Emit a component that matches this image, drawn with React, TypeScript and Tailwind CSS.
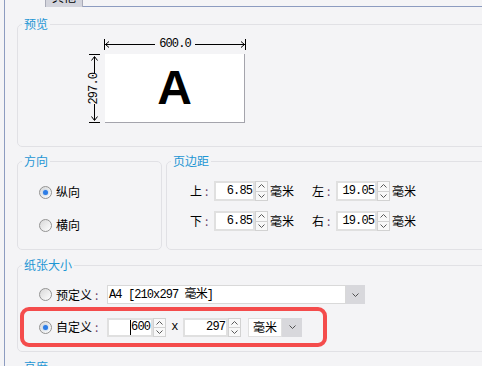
import type { ReactNode } from "react";

const mono = "font-['Liberation_Mono','Noto_Sans_CJK_SC',monospace] text-[12px] tracking-[-0.9px]";

const Chevron = ({ up }: { up?: boolean }) => (
    <svg width="7" height="4" viewBox="0 0 7 4">
        <polyline
            points={up ? "0.5,3.5 3.5,0.5 6.5,3.5" : "0.5,0.5 3.5,3.5 6.5,0.5"}
            fill="none"
            stroke="currentColor"
            strokeWidth="1"
        />
    </svg>
);

const Spin = () => (
    <div className="flex flex-col w-[13px] h-full border border-[#d2d2d2] bg-[#f8f8f8] text-[#5a5a5a]">
        <div className="flex-1 flex items-center justify-center border-b border-[#d2d2d2]">
            <Chevron up />
        </div>
        <div className="flex-1 flex items-center justify-center">
            <Chevron />
        </div>
    </div>
);

interface NumBoxProps {
    value: string;
    w: string;
    h: string;
    cursor?: boolean;
}

const NumBox = ({ value, w, h, cursor }: NumBoxProps) => (
    <div className={`flex shrink-0 ${h}`}>
        <div className={`${w} h-full bg-white border-2 border-[#e0e0e0] flex items-center justify-end pr-[1px] ${mono}`}>
            {cursor && <span className="w-px h-[15px] bg-black" />}
            {value}
        </div>
        <Spin />
    </div>
);

const Colon = () => <span className="ml-[3px] text-[#6a3f6a]">:</span>;

const Label = ({ text }: { text: string }) => (
    <span className="w-[24px] flex shrink-0">
        {text}
        <Colon />
    </span>
);

const Radio = ({ checked }: { checked?: boolean }) => (
    <span className="w-[13px] h-[13px] rounded-full border border-[#939393] bg-[linear-gradient(135deg,#d8d8d8,#ffffff)] flex items-center justify-center shrink-0">
        {checked && <span className="w-[5px] h-[5px] rounded-full bg-[#2d7de6] shadow-[0_0_2px_#7fb2f0]" />}
    </span>
);

const Group = ({ title, className, children }: { title: string; className: string; children?: ReactNode }) => (
    <fieldset className={`border border-[#e1e1e5] rounded-[5px] px-[4px] shrink-0 ${className}`}>
        <legend className="px-[2px] leading-[16px] text-[12px] text-[#1e96d4]">{title}</legend>
        {children}
    </fieldset>
);

const Preview = () => (
    <div className="ml-[67px] mt-[6px] w-fit">
        <div className="ml-[15px] w-[142px] h-[12px] flex items-center">
            <svg width="8" height="11" viewBox="0 0 8 11">
                <line x1="0.5" y1="0" x2="0.5" y2="11" stroke="black" />
                <polyline points="5,2.5 1.5,5.5 5,8.5" fill="none" stroke="black" />
                <line x1="1" y1="5.5" x2="8" y2="5.5" stroke="black" />
            </svg>
            <div className="flex-1 h-px bg-black" />
            <span className={`px-[4px] leading-[12px] ${mono}`}>600.0</span>
            <div className="flex-1 h-px bg-black" />
            <svg width="8" height="11" viewBox="0 0 8 11">
                <line x1="7.5" y1="0" x2="7.5" y2="11" stroke="black" />
                <polyline points="3,2.5 6.5,5.5 3,8.5" fill="none" stroke="black" />
                <line x1="0" y1="5.5" x2="7" y2="5.5" stroke="black" />
            </svg>
        </div>
        <div className="flex mt-[4px]">
            <div className="w-[11px] h-[69px] flex flex-col items-center">
                <div className="w-[11px] h-px bg-black" />
                <div className="flex-1 flex flex-col items-center pt-[1px]">
                    <svg width="7" height="5" viewBox="0 0 7 5">
                        <polyline points="0.5,4.5 3.5,0.5 6.5,4.5" fill="none" stroke="black" />
                    </svg>
                    <div className="-mt-[4px] w-px flex-1 bg-black" />
                </div>
                <span className={`[writing-mode:vertical-rl] rotate-180 my-[5px] leading-[11px] ${mono}`}>297.0</span>
                <div className="flex-1 flex flex-col items-center pb-[1px]">
                    <div className="-mb-[4px] w-px flex-1 bg-black" />
                    <svg width="7" height="5" viewBox="0 0 7 5">
                        <polyline points="0.5,0.5 3.5,4.5 6.5,0.5" fill="none" stroke="black" />
                    </svg>
                </div>
                <div className="w-[11px] h-px bg-black" />
            </div>
            <div className="ml-[5px] w-[140px] h-[69px] bg-white border-r border-b border-[#a4a4ac] flex items-center justify-center">
                <span className="font-['Liberation_Sans',Arial,sans-serif] font-bold text-[48px] leading-none">A</span>
            </div>
        </div>
    </div>
);

const MarginRow = ({ a, av, b, bv }: { a: string; av: string; b: string; bv: string }) => (
    <div className="flex items-center h-[20px]">
        <Label text={a} />
        <NumBox value={av} w="w-[41px]" h="h-[20px]" />
        <span className="pl-[2px] w-[44px] shrink-0">毫米</span>
        <Label text={b} />
        <NumBox value={bv} w="w-[41px]" h="h-[20px]" />
        <span className="pl-[2px]">毫米</span>
    </div>
);

export default function App() {
    return (
        <div className="w-[482px] h-[366px] overflow-hidden bg-[#f4f4f6] font-['Noto_Sans_CJK_SC','Noto_Sans',sans-serif] text-[12px] text-black">
            <div className="ml-[4px] h-full border-l border-[#8d9cc0] flex flex-col">
                <div className="flex h-[7px] shrink-0">
                    <div className="w-[40px]" />
                    <div className="w-[38px] h-[7px] bg-[#d3d4dc] border-x border-[#a9abb8] overflow-hidden flex justify-center">
                        <span className="leading-[16px] -mt-[11px]">其他</span>
                    </div>
                    <div className="flex-1 border-b border-[#8d9cc0]" />
                </div>

                <div className="pl-[12px] flex flex-col shrink-0">
                    <Group title="预览" className="mt-[9px] w-[500px] h-[131px]">
                        <Preview />
                    </Group>

                    <div className="flex mt-[6px] shrink-0">
                        <Group title="方向" className="w-[145px] h-[97px]">
                            <div className="ml-[17px] mt-[15px] flex flex-col gap-[17px]">
                                <div className="flex items-center h-[16px] gap-[4px]">
                                    <Radio checked />
                                    <span>纵向</span>
                                </div>
                                <div className="flex items-center h-[16px] gap-[4px]">
                                    <Radio />
                                    <span>横向</span>
                                </div>
                            </div>
                        </Group>
                        <Group title="页边距" className="ml-[4px] w-[340px] h-[97px]">
                            <div className="ml-[19px] mt-[12px] flex flex-col gap-[10px]">
                                <MarginRow a="上" av="6.85" b="左" bv="19.05" />
                                <MarginRow a="下" av="6.85" b="右" bv="19.05" />
                            </div>
                        </Group>
                    </div>

                    <Group title="纸张大小" className="mt-[7px] w-[500px] h-[95px]">
                        <div className="ml-[17px] mt-[12px] flex items-center h-[19px]">
                            <Radio />
                            <span className="ml-[4px] w-[51px] shrink-0 flex">
                                预定义
                                <Colon />
                            </span>
                            <div className={`w-[239px] h-full bg-white border border-[#d9d9d9] flex items-center pl-[1px] ${mono}`}>
                                A4 [210x297 毫米]
                            </div>
                            <div className="w-[19px] h-full bg-[#d8d8dc] flex items-center justify-center text-[#505050]">
                                <Chevron />
                            </div>
                        </div>
                        <div className="-ml-[2px] mt-[3px] w-[307px] h-[40px] border-4 border-[#f44c4c] rounded-[9px] flex items-center pl-[15px]">
                            <Radio checked />
                            <span className="ml-[4px] w-[51px] shrink-0 flex">
                                自定义
                                <Colon />
                            </span>
                            <NumBox value="600" w="w-[46px]" h="h-[19px]" cursor />
                            <span className={`w-[17px] text-center ${mono}`}>x</span>
                            <NumBox value="297" w="w-[45px]" h="h-[19px]" />
                            <div className="ml-[7px] flex h-[19px]">
                                <div className="w-[34px] bg-white border border-[#e0e0e0] flex items-center justify-center">毫米</div>
                                <div className="w-[20px] bg-[#d8d8dc] flex items-center justify-center text-[#505050]">
                                    <Chevron />
                                </div>
                            </div>
                        </div>
                    </Group>

                    <Group title="高度" className="mt-[7px] w-[500px] h-[40px]" />
                </div>
            </div>
        </div>
    );
}
